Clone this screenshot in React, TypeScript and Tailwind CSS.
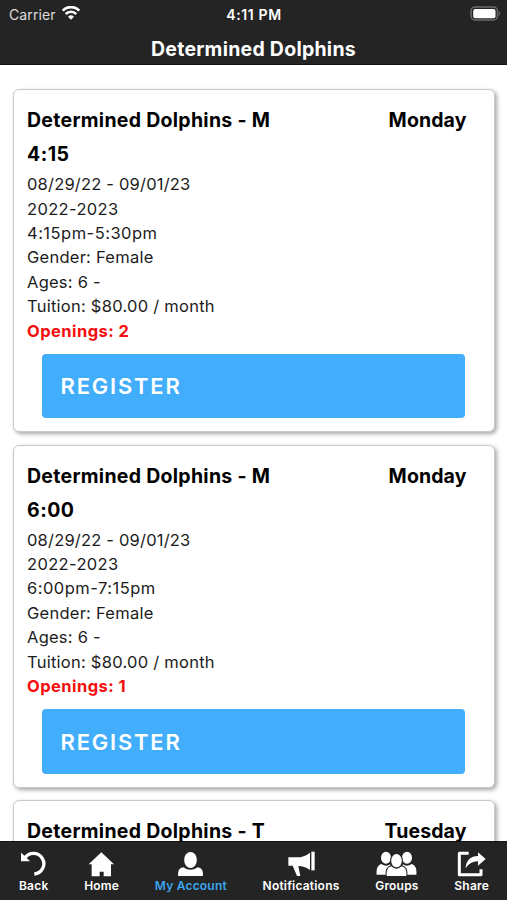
import type { ReactNode } from 'react'

type ClassItem = {
    name: string
    time?: string
    day: string
    hours?: string
    openings?: number
}

const classes: ClassItem[] = [
    { name: 'Determined Dolphins - M', time: '4:15', day: 'Monday', hours: '4:15pm-5:30pm', openings: 2 },
    { name: 'Determined Dolphins - M', time: '6:00', day: 'Monday', hours: '6:00pm-7:15pm', openings: 1 },
    { name: 'Determined Dolphins - T', day: 'Tuesday' },
]

const StatusBar = () => (
    <div className="grid h-[28px] grid-cols-3 items-center pl-[9px] pr-[6px]">
        <div className="flex items-center gap-[6px]">
            <span className="text-[14px] tracking-[0.1px] text-[#dedede]">Carrier</span>
            <svg className="mb-[2px] h-[14px] w-[18px]" viewBox="0 0 54 42" fill="none" stroke="#fff">
                <path d="M2 14C16 -0.5 38 -0.5 52 14" strokeWidth="8" />
                <path d="M11 24C20 15 34 15 43 24" strokeWidth="7.500" />
                <path d="M18 32Q27 24 36 32L27 41Z" fill="#fff" stroke="none" />
            </svg>
        </div>
        <span className="-ml-[2px] text-center text-[14px] font-semibold tracking-[0.600px]">4:11 PM</span>
        <svg className="mb-[2px] h-[15px] w-[31px] justify-self-end" viewBox="0 0 31 15">
            <rect x="1" y="1" width="26.500" height="13" rx="4" fill="#242424" stroke="#6b6b6b" strokeWidth="1.500" />
            <rect x="3.200" y="3" width="22.300" height="9.200" rx="2" fill="#fff" />
            <path d="M28.800 5Q31.500 7.500 28.800 10Z" fill="#6b6b6b" />
        </svg>
    </div>
)

const ClassCard = ({ item }: { item: ClassItem }) => (
    <div className="h-[343px] shrink-0 rounded-[6px] border-[1.500px] border-[#c9c9c9] bg-white px-[13px] pt-[13px] shadow-[2px_2px_4px_rgba(0,0,0,0.35)]">
        <div className="flex justify-between pr-[14.500px] text-[19.500px] font-bold leading-[34.300px] tracking-[0.280px]">
            <h2>
                {item.name}
                {item.time && <span className="block tracking-[0.500px]">{item.time}</span>}
            </h2>
            <span className="tracking-[0.1px]">{item.day}</span>
        </div>
        {item.hours && (
            <>
                <div className="pt-[0.500px] text-[16.500px] leading-[24.400px] tracking-[0.250px] text-[#1c1c1c]">
                    <p className="tracking-[0.200px]">08/29/22 - 09/01/23</p>
                    <p className="tracking-[0.350px]">2022-2023</p>
                    <p className="tracking-[0.480px]">{item.hours}</p>
                    <p>Gender: Female</p>
                    <p>Ages: 6 -</p>
                    <p>Tuition: $80.00 / month</p>
                    <p className="font-bold tracking-[0.450px] text-[#f60d0d]">Openings: {item.openings}</p>
                </div>
                <button className="ml-[14.500px] mt-[11px] flex h-[64.500px] w-[423.500px] items-center rounded-[4px] bg-[#42aefb] pl-[19px] pt-px text-[22px] font-semibold tracking-[1.800px] text-white">
                    REGISTER
                </button>
            </>
        )}
    </div>
)

const Tab = ({ label, active, children }: { label: string; active?: boolean; children: ReactNode }) => (
    <button className="flex flex-col items-center">
        {children}
        <span className={active ? 'text-[12px] font-semibold leading-[16px] tracking-[0.2px] text-[#3ba5ee]' : 'text-[12px] font-semibold leading-[16px] tracking-[0.2px] text-white'}>
            {label}
        </span>
    </button>
)

const App = () => (
    <div className="flex h-[900px] w-[507px] flex-col overflow-hidden bg-white font-['Inter',sans-serif] text-black">
        <header className="h-[64.500px] shrink-0 border-b border-[#111] bg-[#242424] text-white">
            <StatusBar />
            <h1 className="pt-px text-center text-[19.500px] font-bold leading-[40px] tracking-[0.25px]">Determined Dolphins</h1>
        </header>
        <main className="flex min-h-0 flex-1 flex-col gap-[12.500px] overflow-hidden pl-[13px] pr-[12px] pt-[24.500px]">
            {classes.map((item, i) => (
                <ClassCard key={i} item={item} />
            ))}
        </main>
        <nav className="flex h-[59px] shrink-0 justify-between border-t border-[#111] bg-[#242424] pl-[19px] pr-[18px] pt-[9px]">
            <Tab label="Back">
                <svg className="h-[27px] w-[27px]" viewBox="60 33 81 81">
                    <path d="M74 55A31 31 0 1 1 103 102" fill="none" stroke="#fff" strokeWidth="10" />
                    <path d="M63 38L72 46L90 64H63Z" fill="#fff" />
                </svg>
            </Tab>
            <Tab label="Home">
                <svg className="h-[27px] w-[27px]" viewBox="265 33 81 81">
                    <path d="M305 37L343 73H334V109H312V95H300V109H276V73H267Z" fill="#fff" />
                </svg>
            </Tab>
            <Tab label="My Account" active>
                <svg className="h-[27px] w-[27px]" viewBox="112 33 81 81" fill="#fff">
                    <ellipse cx="152.500" cy="60" rx="19" ry="24" />
                    <path d="M115 108Q113 84 131 82Q152 97 174 82Q192 84 190 108Z" />
                </svg>
            </Tab>
            <Tab label="Notifications">
                <svg className="h-[27px] w-[27px]" viewBox="441 33 81 81" fill="#fff">
                    <path d="M442 52H468Q489 52 507 38V90Q490 78 472 78L478 108H468L455 77H442Z" />
                    <path d="M511 35H521V91H511Z" />
                </svg>
            </Tab>
            <Tab label="Groups">
                <svg className="h-[27px] w-[41px]" viewBox="109 33 123 81" fill="#fff">
                    <ellipse cx="139" cy="53" rx="15" ry="18" />
                    <ellipse cx="202" cy="53" rx="15" ry="18" />
                    <path d="M111 104Q108 77 125 72Q139 82 152 73V104Z" />
                    <path d="M230 104Q233 77 216 72Q202 82 189 73V104Z" />
                    <g stroke="#242424" strokeWidth="6" paintOrder="stroke">
                        <path d="M141 108Q138 83 155 79Q170 93 186 79Q203 83 200 108Z" />
                        <ellipse cx="170.500" cy="62" rx="16" ry="20" />
                    </g>
                </svg>
            </Tab>
            <Tab label="Share">
                <svg className="h-[27px] w-[29px]" viewBox="351 33 87 81">
                    <path d="M386 40H358V104H423V88" fill="none" stroke="#fff" strokeWidth="9" strokeLinejoin="round" />
                    <path d="M376 85Q381 48 414 48V37L437 57L414 77V64Q392 63 376 85Z" fill="#fff" />
                </svg>
            </Tab>
        </nav>
    </div>
)

export default App
